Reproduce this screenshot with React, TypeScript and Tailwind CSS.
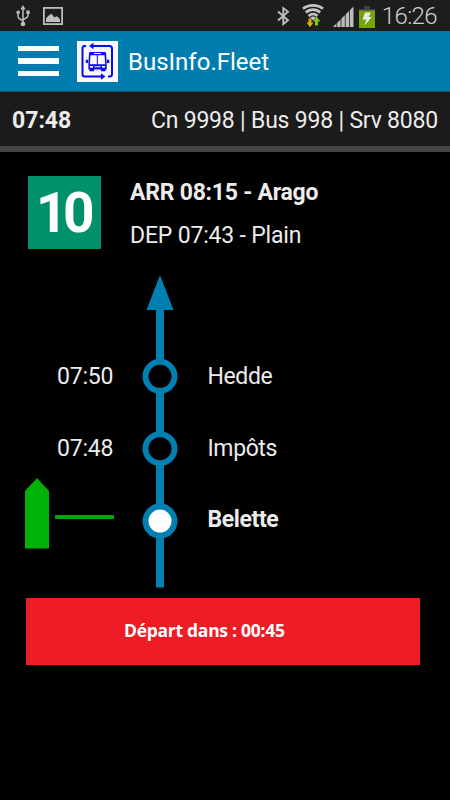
import { clsx } from "clsx"

const stops = [
  { time: "07:50", name: "Hedde", current: false },
  { time: "07:48", name: "Impôts", current: false },
  { time: null, name: "Belette", current: true },
]

function UsbIcon() {
  return (
    <svg width="14" height="22" viewBox="0 0 14 22" fill="none" stroke="#bdbdbd" strokeWidth="1.5">
      <path d="M7 3v16M2 8v3.5c0 1.5 1 2 2 2.5l3 1.8M12 8v2.5c0 1.5-1 2-2 2.5l-3 1.8" />
      <path d="M7 0l2.6 4.5H4.4z" fill="#bdbdbd" stroke="none" />
      <circle cx="7" cy="19" r="2.3" fill="#bdbdbd" stroke="none" />
      <circle cx="2.2" cy="7.3" r="1.8" fill="#bdbdbd" stroke="none" />
      <path d="M10.3 5.5h3.4v3.4h-3.4z" fill="#bdbdbd" stroke="none" />
    </svg>
  )
}

function PictureIcon() {
  return (
    <svg width="20" height="18" viewBox="0 0 20 18">
      <rect x="0.9" y="0.9" width="18.2" height="16.2" fill="none" stroke="#bdbdbd" strokeWidth="1.8" />
      <path d="M3 15v-3.5L5.5 8.5l1.200-.3L8 6.500l1.500 1.500 2 2.500 2-1.200 1.500.7 2 2.500V15z" fill="#bdbdbd" />
    </svg>
  )
}

function BluetoothIcon() {
  return (
    <svg width="13" height="20" viewBox="0 0 13 20" fill="none" stroke="#bdbdbd" strokeWidth="1.9">
      <path d="M1 5.500l10 8.800-4.700 3.800v-16L11 5.700 1 14.500" />
    </svg>
  )
}

function WifiIcon() {
  return (
    <svg width="22" height="24" viewBox="0 0 22 24">
      <g fill="none" stroke="#c4c4c4" strokeWidth="2.6">
        <path d="M1 4.800c5.500-4.600 14.500-4.600 20 0" />
        <path d="M3.800 8.500c4.200-3.900 10.200-3.900 14.400 0" />
        <path d="M6.600 12c2.600-2.500 6.200-2.500 8.800 0" />
      </g>
      <path d="M8.200 13.500c1.700-1.200 3.900-1.200 5.600 0L11 16.500z" fill="#c4c4c4" />
      <path d="M6.500 14.500h3v4h2L8 23.300 4.500 18.500h2z" fill="#e0a912" />
      <path d="M13 21.500h3V17.500h2.500L14.500 12.500 11 17.500h2z" fill="#80c41c" />
    </svg>
  )
}

function SignalIcon() {
  return (
    <svg width="21" height="21" viewBox="0 0 21 21" fill="#bdbdbd">
      <path d="M0 21l3.400-3.400V21zM4.200 16.800l3.400-3.400V21H4.200zM8.400 12.600l3.400-3.400V21H8.400zM12.600 8.400L16 5v16h-3.400zM16.800 4.200L20.500.5V21h-3.700z" />
    </svg>
  )
}

function BatteryIcon() {
  return (
    <svg width="16" height="22" viewBox="0 0 16 22">
      <path d="M5 0h6v3h5v2H0V3h5z" fill="#424242" />
      <path d="M0 4.500h16V22H0z" fill="#74a408" />
      <path d="M6 6.500h6l-2.200 4.500h3L5.500 19.500l1.700-6H3.500z" fill="#e8e8e8" />
    </svg>
  )
}

function BusLogo() {
  return (
    <svg width="41" height="41" viewBox="0 0 41 41" className="bg-[#f8f8fc]">
      <g fill="none" stroke="#0a0af0" strokeWidth="2">
        <path d="M9 5H7.500C6 5 5.500 6 5.500 7.500V33c0 1.500.5 2.500 2 2.500H26" />
        <path d="M15 5h17.500c1.500 0 2.500 1 2.500 2.500V33c0 1.500-1 2.500-2.500 2.500H31" />
      </g>
      <path d="M12 5l4.500-3.300v6.600zM28.500 35.500L24 32.200v6.600z" fill="#0a0af0" />
      <path d="M13.500 11h14c1 0 1.500.6 1.600 1.600l.6 10V28.500H11.400v-5.900l.6-10c0-1 .500-1.600 1.500-1.600z" fill="#0a0af0" />
      <path d="M13.500 14.200h6.300v9H12.800zM20.800 14.200h6.700l.7 9h-7.400z" fill="#f8f8fc" />
      <path d="M17 12h7v1h-7z" fill="#f8f8fc" />
      <path d="M13 25h3v1.800h-3zM25 25h3v1.800h-3zM17.500 25.300h6v1h-6z" fill="#f8f8fc" />
      <path d="M12.500 28H17v2.300h-4.500zM24 28h4.500v2.300H24zM8.800 18.700h2.300v3.300H8.800zM30 18.700h2.300v3.300H30z" fill="#0a0af0" />
    </svg>
  )
}

function RouteLine() {
  return (
    <svg width="36" height="313" viewBox="0 0 36 313">
      <path d="M18 0l13.500 35H22v277.500h-8V35H4.500z" fill="#007fb1" />
      {stops.map((stop, index) => (
        <circle
          key={stop.name}
          cx="18"
          cy={101.3 + index * 72.4}
          r="14.5"
          fill={stop.current ? "#fff" : "#000"}
          stroke="#007fb1"
          strokeWidth="6"
        />
      ))}
    </svg>
  )
}

function VehicleMarker() {
  return (
    <div className="-mt-[13px] flex items-center gap-1.5">
      <svg width="24" height="71" viewBox="0 0 24 71">
        <path d="M0 13L12 0l12 13v57.5H0z" fill="#00b208" />
      </svg>
      <div className="mt-[7px] h-1 w-[59px] bg-[#00a50a]" />
    </div>
  )
}

export default function App() {
  return (
    <div className="flex h-[800px] w-[450px] flex-col overflow-hidden bg-black font-[Roboto,sans-serif] text-[#ececec]">
      {/* Status bar */}
      <div className="flex h-[31px] shrink-0 items-center justify-between bg-[#1d1d1d] pl-4 pr-[13px]">
        <div className="flex items-center gap-[13px]">
          <UsbIcon />
          <PictureIcon />
        </div>
        <div className="flex items-center">
          <BluetoothIcon />
          <div className="ml-3"><WifiIcon /></div>
          <div className="ml-[9px] mt-0.5"><SignalIcon /></div>
          <div className="ml-[5px] mt-0.5"><BatteryIcon /></div>
          <span className="ml-[7px] text-[24px] leading-none font-light tracking-[-0.6px] text-[#cfcfcf]">16:26</span>
        </div>
      </div>

      {/* App header */}
      <header className="flex h-[61px] shrink-0 items-center border-b border-[#14506a] bg-[#007dae] pl-[18px]">
        <div className="flex w-[41px] flex-col gap-[7px]">
          <div className="h-[5.5px] bg-white" />
          <div className="h-[5.5px] bg-white" />
          <div className="h-[5.5px] bg-white" />
        </div>
        <div className="ml-[18px]"><BusLogo /></div>
        <h1 className="ml-[10px] mt-0.5 text-[24px] leading-none text-white">BusInfo.Fleet</h1>
      </header>

      {/* Service info */}
      <div className="flex h-[60px] shrink-0 items-center justify-between border-b-[6px] border-[#444444] bg-[#1b1b1b] px-3 pt-[3px] text-[23px] leading-none">
        <span className="font-bold">07:48</span>
        <span className="tracking-[-0.2px]">Cn 9998 | Bus 998 | Srv 8080</span>
      </div>

      <main className="flex flex-col">
        <div className="flex pl-[28px] pt-6">
          <div className="flex h-[73px] w-[73px] items-center justify-center bg-[#00906a] pr-[3px] pt-0.5 text-[55px] font-bold leading-none tracking-[-4.5px] text-white">
            10
          </div>
          <div className="ml-[29px] text-[23px] leading-none">
            <p className="mt-[5px] font-bold tracking-[-0.24px]">ARR 08:15 - Arago</p>
            <p className="mt-[20px] tracking-[-0.18px]">DEP 07:43 - Plain</p>
          </div>
        </div>

        <div className="mt-[26px] flex h-[313px]">
          <div className="flex w-[117px] flex-col pl-[25px] pt-[65px]">
            {stops.map((stop) => (
              <div key={stop.name} className="flex h-[72px] items-center">
                {stop.time ? (
                  <span className="ml-8 text-[23px] leading-none tracking-[-0.2px]">{stop.time}</span>
                ) : (
                  <VehicleMarker />
                )}
              </div>
            ))}
          </div>
          <div className="ml-[25px]"><RouteLine /></div>
          <div className="ml-[29.5px] pt-[65px]">
            {stops.map((stop) => (
              <div
                key={stop.name}
                className={clsx(
                  "flex h-[72px] items-center text-[23px] leading-none tracking-[-0.4px]",
                  stop.current && "-mt-px font-bold"
                )}
              >
                {stop.name}
              </div>
            ))}
          </div>
        </div>

        {/* Countdown */}
        <div className="ml-[26px] mt-[10px] flex h-[67px] w-[393.5px] items-center bg-[#ee1c25] pb-px pl-[98px] font-['Open_Sans',sans-serif] text-[17.5px] font-bold leading-none tracking-[-0.28px] text-white">
          Départ dans : 00:45
        </div>
      </main>
    </div>
  )
}
